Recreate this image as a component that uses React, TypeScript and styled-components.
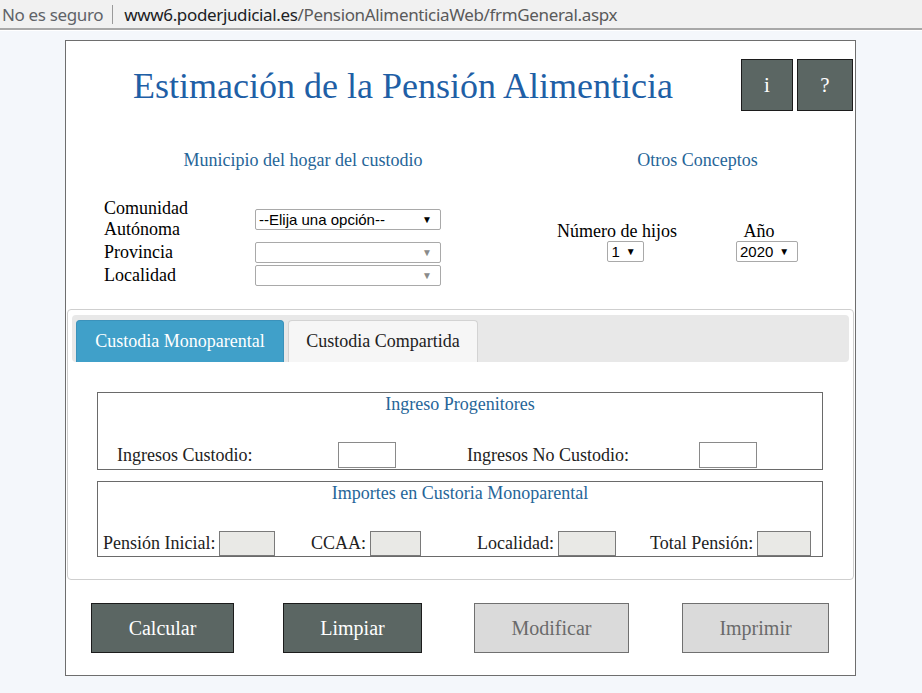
import React from "react";
import styled, { createGlobalStyle } from "styled-components";

const SERIF = `"Liberation Serif", "Times New Roman", Tinos, "DejaVu Serif", serif`;

const Global = createGlobalStyle`
  html, body { margin: 0; padding: 0; }
  body { background: #f4f7fb; font-family: ${SERIF}; }
`;

const AddressBar = styled.div`
  height: 28px;
  background: #f1f1f1;
  border-bottom: 2px solid #a8a8a8;
  box-shadow: 0 1px 0 #ffffff;
  display: flex;
  align-items: center;
  padding-left: 2px;
  font-family: "Noto Sans", "Open Sans", sans-serif;
  font-size: 17px;
  letter-spacing: -0.35px;
  white-space: nowrap;
`;

const Insecure = styled.span`
  color: #5f6368;
`;

const Divider = styled.span`
  display: inline-block;
  width: 1px;
  height: 19px;
  background: #9a9a9a;
  margin: 0 11px 0 9px;
`;

const Domain = styled.span`
  color: #202124;
`;

const Path = styled.span`
  color: #5a5a5a;
`;

const Page = styled.div`
  padding: 10px 0 16px 65px;
`;

const Container = styled.div`
  width: 789px;
  height: 634px;
  background: #ffffff;
  border: 1px solid #6e6e6e;
  display: flex;
  flex-direction: column;
`;

const Header = styled.div`
  display: flex;
  align-items: center;
  height: 52px;
  margin-top: 18px;
  padding-left: 67px;
`;

const Title = styled.h1`
  margin: 0;
  flex: 1;
  font-family: ${SERIF};
  font-weight: 400;
  font-size: 36px;
  color: #1f5fa6;
  line-height: 52px;
  position: relative;
  top: 1px;
`;

const HeaderButtons = styled.div`
  display: flex;
  gap: 4px;
  margin-right: 2px;
`;

const IconButton = styled.button<{ $w: number }>`
  width: ${(p) => p.$w}px;
  height: 52px;
  background: #5b6663;
  border: 1px solid #1c1c1c;
  color: #ffffff;
  font-family: ${SERIF};
  font-size: 21px;
  padding: 0;
`;

const Sections = styled.div`
  display: flex;
  margin-top: 39px;
  height: 159px;
`;

const LeftCol = styled.div`
  width: 474px;
`;

const RightCol = styled.div`
  flex: 1;
`;

const SectionHeading = styled.div`
  text-align: center;
  font-size: 18px;
  color: #266598;
  line-height: 21px;
`;

const AddressGrid = styled.div`
  display: grid;
  grid-template-columns: 151px 186px;
  row-gap: 2px;
  margin: 27px 0 0 38px;
  align-items: center;
`;

const FieldLabel = styled.div`
  font-size: 18px;
  line-height: 21px;
  color: #000;
`;

const Select = styled.div<{ $w: number; $disabled?: boolean; $shift?: number }>`
  box-sizing: border-box;
  width: ${(p) => p.$w}px;
  height: 21px;
  margin-left: ${(p) => p.$shift ?? 0}px;
  border: 1px solid #a9a9a9;
  border-radius: 2px;
  background: #fff;
  display: flex;
  align-items: center;
  padding: 0 8px 0 3px;
  font-family: "Liberation Sans", Arial, sans-serif;
  font-size: 15px;
  color: #000;
  &::after {
    content: "▼";
    font-size: 10px;
    color: ${(p) => (p.$disabled ? "#8a8a8a" : "#000")};
    margin-left: auto;
    padding-left: 6px;
  }
`;

const OtherRow = styled.div`
  display: flex;
  margin-top: 50px;
`;

const OtherGroup = styled.div<{ $left: number; $labelShift: number }>`
  display: flex;
  flex-direction: column;
  align-items: center;
  margin-left: ${(p) => p.$left}px;
  & > ${FieldLabel} {
    margin-right: ${(p) => p.$labelShift}px;
    line-height: 20px;
  }
`;

const TabPanel = styled.div`
  margin: 0 1px;
  height: 264px;
  border: 1px solid #cfcfcf;
  border-radius: 4px;
  padding: 5px 4px 0 4px;
  display: flex;
  flex-direction: column;
`;

const TabStrip = styled.div`
  height: 42px;
  background: #e8e8e8;
  border-radius: 4px;
  padding: 5px 4px 0 4px;
  display: flex;
  gap: 4px;
  align-items: flex-end;
`;

const Tab = styled.div<{ $active?: boolean; $w: number }>`
  box-sizing: border-box;
  width: ${(p) => p.$w}px;
  height: 42px;
  border-radius: 4px 4px 0 0;
  border: 1px solid ${(p) => (p.$active ? "#3b92bb" : "#d3d3d3")};
  border-bottom: none;
  background: ${(p) => (p.$active ? "#40a0c9" : "#f6f6f6")};
  color: ${(p) => (p.$active ? "#ffffff" : "#222")};
  font-size: 18px;
  display: flex;
  align-items: center;
  justify-content: center;
`;

const Fieldset = styled.div<{ $top: number; $h: number }>`
  box-sizing: border-box;
  margin: ${(p) => p.$top}px 0 0 25px;
  width: 726px;
  height: ${(p) => p.$h}px;
  border: 1px solid #6a6a6a;
  display: flex;
  flex-direction: column;
`;

const Legend = styled.div`
  text-align: center;
  font-size: 18px;
  color: #266598;
  line-height: 21px;
  margin-top: 1px;
`;

const IncomeRow = styled.div`
  display: grid;
  grid-template-columns: 240px 129px 232px 1fr;
  align-items: center;
  margin-top: auto;
  margin-bottom: 1px;
`;

const RowLabel = styled.span<{ $pad?: number }>`
  font-size: 18px;
  color: #222;
  padding-left: ${(p) => p.$pad ?? 0}px;
  line-height: 21px;
`;

const TextInput = styled.div<{ $w: number; $readonly?: boolean }>`
  box-sizing: border-box;
  width: ${(p) => p.$w}px;
  height: ${(p) => (p.$readonly ? 25 : 26)}px;
  border: 1px solid ${(p) => (p.$readonly ? "#7a7a7a" : "#8a8a8a")};
  background: ${(p) => (p.$readonly ? "#e9e9e6" : "#ffffff")};
`;

const AmountRow = styled.div`
  display: grid;
  grid-template-columns: 208px 166px 173px 1fr;
  align-items: end;
  margin-top: auto;
`;

const AmountCell = styled.div`
  display: flex;
  align-items: center;
  gap: 4px;
  padding-left: 5px;
`;

const ActionRow = styled.div`
  display: flex;
  margin-top: 23px;
  padding-left: 25px;
`;

const ActionButton = styled.button<{ $w: number; $left: number; $dark?: boolean }>`
  width: ${(p) => p.$w}px;
  height: 50px;
  margin-left: ${(p) => p.$left}px;
  background: ${(p) => (p.$dark ? "#5b6663" : "#dadada")};
  border: 1px solid ${(p) => (p.$dark ? "#1c1c1c" : "#707070")};
  color: ${(p) => (p.$dark ? "#ffffff" : "#6a6a6a")};
  font-family: ${SERIF};
  font-size: 20px;
  padding: 0;
`;

export default function App() {
  return (
    <>
      <Global />
      <AddressBar>
        <Insecure>No es seguro</Insecure>
        <Divider />
        <Domain>www6.poderjudicial.es</Domain>
        <Path>/PensionAlimenticiaWeb/frmGeneral.aspx</Path>
      </AddressBar>
      <Page>
        <Container>
          <Header>
            <Title>Estimación de la Pensión Alimenticia</Title>
            <HeaderButtons>
              <IconButton $w={52}>i</IconButton>
              <IconButton $w={56}>?</IconButton>
            </HeaderButtons>
          </Header>

          <Sections>
            <LeftCol>
              <SectionHeading>Municipio del hogar del custodio</SectionHeading>
              <AddressGrid>
                <FieldLabel>
                  Comunidad
                  <br />
                  Autónoma
                </FieldLabel>
                <Select $w={186}>--Elija una opción--</Select>
                <FieldLabel>Provincia</FieldLabel>
                <Select $w={186} $disabled />
                <FieldLabel>Localidad</FieldLabel>
                <Select $w={186} $disabled />
              </AddressGrid>
            </LeftCol>
            <RightCol>
              <SectionHeading>Otros Conceptos</SectionHeading>
              <OtherRow>
                <OtherGroup $left={17} $labelShift={0}>
                  <FieldLabel>Número de hijos</FieldLabel>
                  <Select $w={37} $shift={18}>1</Select>
                </OtherGroup>
                <OtherGroup $left={59} $labelShift={16}>
                  <FieldLabel>Año</FieldLabel>
                  <Select $w={62}>2020</Select>
                </OtherGroup>
              </OtherRow>
            </RightCol>
          </Sections>

          <TabPanel>
            <TabStrip>
              <Tab $active $w={208}>Custodia Monoparental</Tab>
              <Tab $w={190}>Custodia Compartida</Tab>
            </TabStrip>
            <Fieldset $top={30} $h={78}>
              <Legend>Ingreso Progenitores</Legend>
              <IncomeRow>
                <RowLabel $pad={19}>Ingresos Custodio:</RowLabel>
                <TextInput $w={58} />
                <RowLabel>Ingresos No Custodio:</RowLabel>
                <TextInput $w={58} />
              </IncomeRow>
            </Fieldset>
            <Fieldset $top={11} $h={76}>
              <Legend>Importes en Custoria Monoparental</Legend>
              <AmountRow>
                <AmountCell>
                  <RowLabel>Pensión Inicial:</RowLabel>
                  <TextInput $w={56} $readonly />
                </AmountCell>
                <AmountCell>
                  <RowLabel>CCAA:</RowLabel>
                  <TextInput $w={51} $readonly />
                </AmountCell>
                <AmountCell>
                  <RowLabel>Localidad:</RowLabel>
                  <TextInput $w={58} $readonly />
                </AmountCell>
                <AmountCell>
                  <RowLabel>Total Pensión:</RowLabel>
                  <TextInput $w={54} $readonly />
                </AmountCell>
              </AmountRow>
            </Fieldset>
          </TabPanel>

          <ActionRow>
            <ActionButton $dark $w={143} $left={0}>Calcular</ActionButton>
            <ActionButton $dark $w={139} $left={49}>Limpiar</ActionButton>
            <ActionButton $w={155} $left={52}>Modificar</ActionButton>
            <ActionButton $w={147} $left={53}>Imprimir</ActionButton>
          </ActionRow>
        </Container>
      </Page>
    </>
  );
}
